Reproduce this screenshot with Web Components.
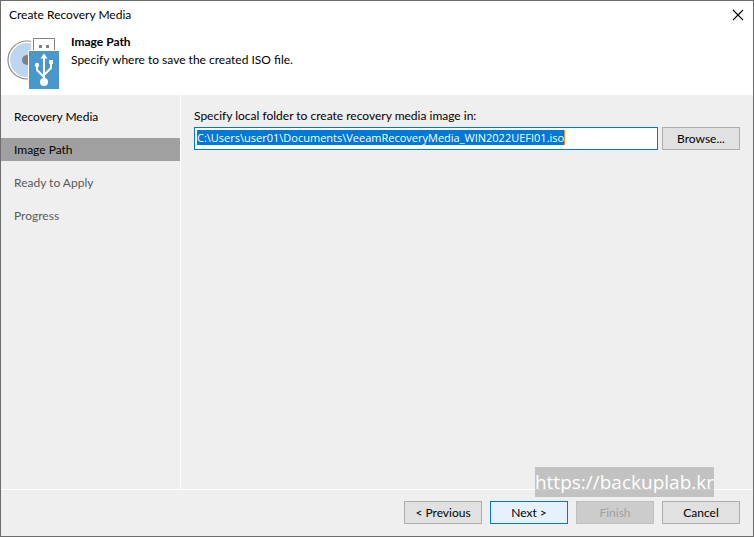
<!DOCTYPE html>
<html lang="en">
<head>
<meta charset="utf-8">
<meta name="viewport" content="width=device-width, initial-scale=1">
<title>Create Recovery Media</title>
<style>
    body {
        margin: 0;
        font: 12px/16px "Lato", "Open Sans", sans-serif;
        color: #000;
    }
</style>
</head>
<body>
<wizard-window heading="Create Recovery Media">
    <wizard-header slot="header" heading="Image Path">Specify where to save the created ISO file.</wizard-header>
    <wizard-steps slot="steps">
        <wizard-step state="done">Recovery Media</wizard-step>
        <wizard-step state="current">Image Path</wizard-step>
        <wizard-step>Ready to Apply</wizard-step>
        <wizard-step>Progress</wizard-step>
    </wizard-steps>
    <path-field label="Specify local folder to create recovery media image in:" value="C:\Users\user01\Documents\VeeamRecoveryMedia_WIN2022UEFI01.iso"></path-field>
    <dialog-button slot="actions">&lt; Previous</dialog-button>
    <dialog-button slot="actions" primary>Next &gt;</dialog-button>
    <dialog-button slot="actions" disabled>Finish</dialog-button>
    <dialog-button slot="actions">Cancel</dialog-button>
    <site-watermark slot="overlay" href="https://backuplab.kr">https://backuplab.kr</site-watermark>
</wizard-window>

<script>
class WizardWindow extends HTMLElement {
    connectedCallback() {
        this.attachShadow({ mode: 'open' });
        this.shadowRoot.innerHTML = `
            <style>
                :host {
                    position: relative;
                    box-sizing: border-box;
                    display: flex;
                    flex-direction: column;
                    min-height: 100vh;
                    border: 1px solid #6d6d6d;
                    background: #efefef;
                }

                .titlebar {
                    display: flex;
                    align-items: center;
                    justify-content: space-between;
                    height: 28px;
                    padding: 0 7px 0 8px;
                    background: #fff;
                }

                h1 {
                    margin: 0;
                    font: inherit;
                }

                .close {
                    display: flex;
                    padding: 2px;
                    border: 0;
                    background: none;
                }

                .body {
                    flex: 1;
                    display: grid;
                    grid-template-columns: 179px 1fr;
                }

                main {
                    padding: 13px;
                    border-left: 1px solid #fff;
                }

                footer {
                    display: flex;
                    justify-content: flex-end;
                    gap: 8px;
                    padding: 11px 13px 12px;
                    border-top: 1px solid #fff;
                }
            </style>
            <div class="titlebar">
                <h1></h1>
                <button class="close" type="button" aria-label="Close">
                    <svg width="12" height="12" viewBox="0 0 12 12" fill="none" stroke="#000" stroke-width="1.1">
                        <path d="M1 1l10 10M11 1L1 11"/>
                    </svg>
                </button>
            </div>
            <slot name="header"></slot>
            <div class="body">
                <slot name="steps"></slot>
                <main><slot></slot></main>
            </div>
            <footer><slot name="actions"></slot></footer>
            <slot name="overlay"></slot>
        `;
        this.shadowRoot.querySelector('h1').textContent = this.getAttribute('heading');
    }
}

class WizardHeader extends HTMLElement {
    connectedCallback() {
        this.attachShadow({ mode: 'open' });
        this.shadowRoot.innerHTML = `
            <style>
                :host {
                    display: flex;
                    gap: 10px;
                    height: 60px;
                    padding: 5px 6px 1px;
                    background: #fff;
                }

                svg {
                    flex: none;
                }

                h2 {
                    margin: 0 0 2px;
                    font-size: 12px;
                    line-height: 16px;
                    font-weight: 700;
                }

                p {
                    margin: 0;
                }
            </style>
            <svg width="54" height="58" viewBox="0 0 54 58" aria-hidden="true">
                <circle cx="20" cy="26" r="19" fill="#fff" stroke="#8b8b8b" stroke-width="1.2"/>
                <circle cx="20" cy="26" r="17" fill="#bdd6ef"/>
                <circle cx="20" cy="26" r="5" fill="#808080"/>
                <path d="M24 2h26v16H24z" fill="#fff"/>
                <path d="M26.500 16V4.500h21V16" fill="#fff" stroke="#808080"/>
                <path d="M32 11h3v3h-3zM39 11h3v3h-3z" fill="#808080"/>
                <path d="M21 16h32v39H21z" fill="#fff"/>
                <path d="M22 17h30v38H22z" fill="#4a98c9"/>
                <path d="M37 23v24M30 32v4l7 7M44 29v5l-7 7" fill="none" stroke="#fff" stroke-width="2"/>
                <path d="M37 19.500l3.500 5h-7zM42 26h4v4h-4z" fill="#fff"/>
                <circle cx="30" cy="31" r="2.200" fill="#fff"/>
                <circle cx="37" cy="48" r="4" fill="#fff"/>
            </svg>
            <div>
                <h2></h2>
                <p><slot></slot></p>
            </div>
        `;
        this.shadowRoot.querySelector('h2').textContent = this.getAttribute('heading');
    }
}

class WizardSteps extends HTMLElement {
    connectedCallback() {
        this.attachShadow({ mode: 'open' });
        this.shadowRoot.innerHTML = `
            <style>
                :host {
                    display: block;
                    padding-top: 10px;
                }

                nav {
                    display: flex;
                    flex-direction: column;
                    gap: 10px;
                }
            </style>
            <nav aria-label="Wizard steps"><slot></slot></nav>
        `;
    }
}

class WizardStep extends HTMLElement {
    connectedCallback() {
        this.attachShadow({ mode: 'open' });
        this.shadowRoot.innerHTML = `
            <style>
                :host {
                    display: block;
                    padding: 4px 13px 3px;
                    color: #5a5a5a;
                }

                :host([state]) {
                    color: #000;
                }

                :host([state="current"]) {
                    background: #a0a0a0;
                }
            </style>
            <slot></slot>
        `;
        if (this.getAttribute('state') === 'current') {
            this.setAttribute('aria-current', 'step');
        }
    }
}

class DialogButton extends HTMLElement {
    connectedCallback() {
        this.attachShadow({ mode: 'open' });
        this.shadowRoot.innerHTML = `
            <style>
                :host {
                    display: block;
                    flex: none;
                }

                button {
                    display: block;
                    box-sizing: border-box;
                    width: 78px;
                    height: 23px;
                    padding: 0;
                    border: 1px solid #adadad;
                    background: #e1e1e1;
                    color: #000;
                    font: inherit;
                }

                :host([primary]) button {
                    border-color: #0078d7;
                    background: #e5f1fb;
                }

                button:disabled {
                    border-color: #bfbfbf;
                    background: #ccc;
                    color: #a0a0a0;
                }
            </style>
            <button type="button"><slot></slot></button>
        `;
        this.shadowRoot.querySelector('button').disabled = this.hasAttribute('disabled');
    }
}

class PathField extends HTMLElement {
    connectedCallback() {
        this.attachShadow({ mode: 'open' });
        this.shadowRoot.innerHTML = `
            <style>
                :host {
                    display: block;
                }

                label {
                    display: block;
                    margin-bottom: 3px;
                }

                .row {
                    display: flex;
                    gap: 4px;
                }

                .box {
                    flex: 1;
                    min-width: 0;
                    display: flex;
                    align-items: flex-start;
                    box-sizing: border-box;
                    height: 23px;
                    padding: 2px;
                    border: 1px solid #0078d7;
                    background: #fff;
                    cursor: text;
                }

                input {
                    field-sizing: content;
                    max-width: 100%;
                    box-sizing: border-box;
                    height: 15px;
                    padding: 0;
                    border: 0;
                    border-right: 1px solid #ff8728;
                    outline: 0;
                    background: none;
                    color: #000;
                    font: 11px/15px "Open Sans", "Noto Sans", sans-serif;
                }

                input::selection {
                    background: #0078d7;
                    color: #fff;
                }
            </style>
            <label for="path"></label>
            <div class="row">
                <div class="box"><input id="path" type="text" spellcheck="false"></div>
                <dialog-button>Browse...</dialog-button>
            </div>
        `;
        this.shadowRoot.querySelector('label').textContent = this.getAttribute('label');
        const input = this.shadowRoot.querySelector('input');
        input.value = this.getAttribute('value');
        input.focus();
        input.select();
        this.shadowRoot.querySelector('.box').addEventListener('click', () => input.focus());
    }
}

class SiteWatermark extends HTMLElement {
    connectedCallback() {
        this.attachShadow({ mode: 'open' });
        this.shadowRoot.innerHTML = `
            <style>
                :host {
                    position: absolute;
                    right: 39px;
                    bottom: 39px;
                    background: rgba(128, 128, 128, 0.4);
                    font-family: "Open Sans", "Noto Sans", sans-serif;
                    font-size: 19px;
                    font-weight: 500;
                    line-height: 30px;
                }

                a {
                    color: #fff;
                    text-decoration: none;
                }
            </style>
            <a><slot></slot></a>
        `;
        this.shadowRoot.querySelector('a').href = this.getAttribute('href');
    }
}

customElements.define('wizard-window', WizardWindow);
customElements.define('wizard-header', WizardHeader);
customElements.define('wizard-steps', WizardSteps);
customElements.define('wizard-step', WizardStep);
customElements.define('dialog-button', DialogButton);
customElements.define('path-field', PathField);
customElements.define('site-watermark', SiteWatermark);
</script>
</body>
</html>
